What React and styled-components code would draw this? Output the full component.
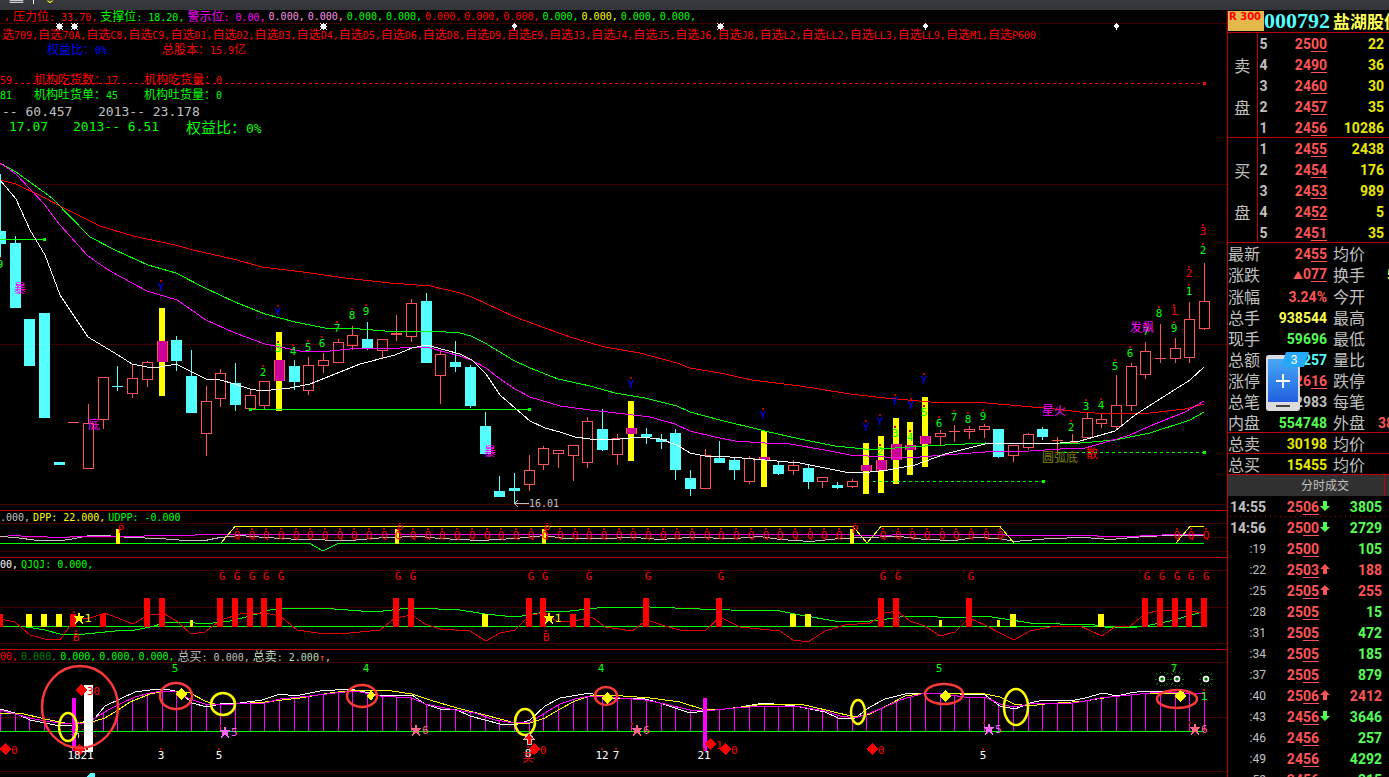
import React from 'react';
import styled, { createGlobalStyle } from 'styled-components';

const MONO = '"DejaVu Sans Mono", "Noto Sans CJK SC", monospace';
const HAN = '"Noto Sans CJK SC", sans-serif';
const NUM = 'Roboto, "Noto Sans CJK SC", sans-serif';

const RED = '#ff0000';
const GREEN = '#00ff00';
const MAGENTA = '#ff00ff';
const YELLOW = '#ffff00';
const GRAY = '#c0c0c0';
const UP = '#ff5454';
const DOWN = '#54ffff';
const GRID = '#400000';

const GlobalStyle = createGlobalStyle`
  * { box-sizing: border-box; }
  body { margin: 0; background: #000; color: ${GRAY}; font-family: ${NUM}; }
`;

const Shell = styled.div`
  height: 100vh;
  overflow: hidden;
  display: flex;
  flex-direction: column;
`;
const TopBar = styled.header`
  flex: none;
  height: 10px;
  overflow: hidden;
  background: linear-gradient(#3a3b3f, #333438);
  svg { display: block; }
`;
const Columns = styled.div`
  flex: 1;
  min-height: 0;
  display: grid;
  grid-template-columns: minmax(0, 1fr) 162px;
`;
const Charts = styled.main`
  min-width: 0;
  overflow: hidden;
`;
const Panel = styled.section`
  border-top: ${(p) => (p.$first ? '0' : '1px solid #c00000')};
`;
const Legend = styled.div`
  display: flex;
  gap: 3px;
  height: ${(p) => p.$height || 12}px;
  padding-left: ${(p) => p.$inset || 0}px;
  white-space: nowrap;
  font: 10px/13px ${MONO};
`;
const Tint = styled.span`
  color: ${(p) => p.$color};
  white-space: pre;
`;
const Han = styled.span`
  font-family: ${HAN};
  font-size: ${(p) => p.$size}px;
  line-height: 1;
`;
const Canvas = styled.div`
  position: relative;
`;
const Drawing = styled.svg`
  display: block;
  width: 100%;
  height: auto;
  overflow: hidden;
`;
const Notes = styled.div`
  position: absolute;
  top: 5px;
  left: 0;
`;
const NoteRow = styled.div`
  display: grid;
  grid-template-columns: ${(p) => p.$columns || 'auto'};
  height: 15px;
  margin-top: ${(p) => p.$gap || 0}px;
  padding-left: ${(p) => p.$inset || 0}px;
  white-space: pre;
  color: ${(p) => p.$color};
  font: ${(p) => (p.$large ? 13 : 10)}px/15px ${MONO};
`;

const Side = styled.aside`
  border-left: 1px solid #c00000;
  position: relative;
  overflow: hidden;
`;
const StockHead = styled.div`
  display: flex;
  align-items: center;
  height: 23px;
  overflow: hidden;
  white-space: nowrap;
  border-bottom: 1px solid #c00000;
`;
const Tag = styled.span`
  flex: none;
  align-self: flex-start;
  width: 36px;
  height: 20px;
  margin-top: 1px;
  padding-left: 1px;
  background: #e4b84a;
  color: ${RED};
  font: bold 10px/12px "DejaVu Sans", sans-serif;
`;
const Code = styled.strong`
  flex: none;
  font: bold 22px/22px "Liberation Serif", serif;
  color: ${DOWN};
`;
const StockName = styled.strong`
  flex: none;
  margin-left: 3px;
  font: bold 17px/22px ${HAN};
  color: #ffff54;
`;
const Grid = styled.table`
  width: 100%;
  table-layout: fixed;
  border-collapse: collapse;
  border-spacing: 0;
  font: bold 14px/20px ${NUM};
  td, th { padding: 0; height: 21px; white-space: nowrap; }
`;
const Book = styled(Grid)`
  height: 105px;
  box-shadow: inset 0 -1px #c00000;
`;
const BookSide = styled.th`
  border-right: 1px solid #c00000;
  font: 16px/42px ${HAN};
  span { display: block; }
`;
const Level = styled.th`
  text-align: left;
  padding-left: 2px !important;
`;
const Value = styled.td`
  color: ${(p) => p.$color};
  text-align: right;
  padding-right: ${(p) => p.$end || 0}px !important;
  u { text-decoration: underline; text-decoration-thickness: 1px; text-underline-offset: 2px; }
  svg { display: block; }
`;
const Triangle = styled.span`
  font-size: 10px;
`;
const Label = styled.th`
  font: 16px/18px ${HAN};
  text-align: left;
  padding-left: ${(p) => p.$start || 0}px !important;
  padding-bottom: 2px !important;
`;
const Cut = styled.td`
  overflow: hidden;
  color: ${(p) => p.$color};
  padding-left: ${(p) => p.$start}px !important;
`;
const Quotes = styled(Grid)`
  box-shadow: inset 0 -1px #c00000;
`;
const TicksTitle = styled.h2`
  display: flex;
  margin: 0;
  height: 21px;
  background: #303030;
  font: 12px/20px ${HAN};
  color: ${GRAY};
  span { flex: 1; padding-left: 38px; text-align: center; border-right: 1px solid #c00000; }
  &::after { content: ''; width: 4px; }
`;
const TickRow = styled.tr`
  ${(p) => p.$dotted && 'background: radial-gradient(circle, #c00000 1px, transparent 1px) 0 19px / 5px 3px repeat-x;'}
`;
const Time = styled.th`
  text-align: right;
  font: ${(p) => (p.$full ? 'bold 14px' : '12px')}/20px ${NUM};
`;
const PhoneButton = styled.button`
  position: absolute;
  left: 38px;
  top: 341px;
  padding: 0;
  border: 0;
  background: none;
  svg { display: block; }
`;

const HAN_RUN = /([\u3000-\u9fff\uff00-\uffef]+)/;
const Mixed = ({ children, size = 12 }) =>
  children.split(HAN_RUN).map((part, i) => (i % 2 ? <Han key={i} $size={size}>{part}</Han> : part));

const legends = {
  price: [
    [RED, ','], [RED, '压力位: 33.70,'], [GREEN, '支撑位: 18.20,'], [MAGENTA, '警示位: 0.00,'],
    ['#ff90e8', '0.000,'], ['#ff90e8', '0.000,'], [GREEN, '0.000,'], [GREEN, '0.000,'],
    [RED, '0.000,'], [RED, '0.000,'], [RED, '0.000,'], [GREEN, '0.000,'],
    [YELLOW, '0.000,'], [GREEN, '0.000,'], [GREEN, '0.000,'],
  ],
  dpp: [[GRAY, '.000,'], [YELLOW, 'DPP: 22.000,'], [GREEN, 'UDPP: -0.000']],
  qjqj: [['#ffffff', '00,'], [GREEN, 'QJQJ: 0.000,']],
  flow: [
    [RED, '00,'], ['#008000', '0.000,'], [GREEN, '0.000,'], [GREEN, '0.000,'], [GREEN, '0.000,'],
    [GRAY, '总买: 0.000,'], ['#c0dcc0', '总卖: 2.000', UP, '↑', ','],
  ],
};
const LegendRow = ({ items, ...rest }) => (
  <Legend {...rest}>
    {items.map(([color, text, markColor, mark, tail], i) => (
      <Tint key={i} $color={color}>
        <Mixed>{text}</Mixed>
        {mark && <Tint $color={markColor}>{mark}</Tint>}
        {tail}
      </Tint>
    ))}
  </Legend>
);

const slot = (k) => Math.floor(162 + 14.683 * (k - 11));

/* [kind, high, top, bottom, low, yellow bar from, to] for each trading day */
const candles = [
  ['d', 174, 231, 244, 257], ['d', 236, 243, 308, 308], ['d', 319, 319, 366, 366], ['d', 313, 313, 418, 418],
  ['d', 462, 462, 465, 465], ['u', 422, 422, 423, 423], ['u', 404, 423, 469, 469], ['u', 377, 377, 420, 429],
  ['d', 366, 386, 387, 391], ['u', 365, 378, 394, 398], ['u', 361, 362, 380, 387], ['m', 341, 341, 362, 362, 308, 396],
  ['d', 336, 340, 361, 371], ['d', 350, 376, 413, 413], ['u', 386, 401, 434, 456], ['u', 369, 373, 399, 407],
  ['d', 363, 383, 405, 411], ['u', 390, 395, 409, 409], ['u', 381, 381, 406, 409], ['m', 360, 360, 381, 381, 332, 411],
  ['d', 360, 366, 382, 390], ['u', 357, 365, 391, 395], ['u', 353, 360, 366, 373], ['u', 339, 342, 363, 363],
  ['u', 326, 335, 346, 350], ['d', 322, 339, 348, 350], ['u', 339, 339, 351, 359], ['u', 315, 333, 335, 341],
  ['u', 299, 303, 337, 342], ['d', 293, 301, 363, 363], ['u', 350, 354, 376, 404], ['d', 341, 362, 367, 372],
  ['d', 365, 367, 406, 408], ['d', 412, 426, 454, 454], ['d', 476, 491, 497, 497], ['d', 473, 488, 491, 504],
  ['u', 455, 470, 485, 491], ['u', 446, 448, 465, 470], ['u', 450, 450, 454, 468], ['u', 445, 445, 456, 481],
  ['u', 417, 421, 463, 468], ['d', 409, 429, 450, 451], ['u', 434, 438, 455, 465], ['m', 428, 428, 434, 434, 401, 461],
  ['d', 428, 434, 437, 444], ['d', 434, 439, 442, 449], ['d', 429, 433, 470, 480], ['d', 470, 478, 489, 496],
  ['u', 449, 455, 489, 489], ['d', 441, 458, 463, 463], ['d', 457, 460, 470, 480], ['u', 456, 458, 482, 484],
  ['m', 457, 457, 460, 460, 431, 487], ['d', 462, 465, 474, 475], ['u', 460, 465, 471, 475], ['d', 465, 468, 482, 489],
  ['u', 477, 477, 482, 488], ['d', 482, 485, 488, 489], ['u', 479, 481, 487, 488], ['m', 465, 465, 471, 471, 443, 494],
  ['m', 460, 460, 471, 471, 436, 493], ['m', 444, 444, 460, 460, 418, 484], ['m', 445, 445, 450, 450, 422, 475], ['m', 436, 436, 444, 444, 397, 467],
  ['u', 430, 433, 437, 445], ['u', 425, 431, 432, 442], ['u', 426, 429, 432, 439], ['u', 424, 426, 430, 438],
  ['d', 429, 429, 457, 458], ['u', 445, 445, 456, 462], ['u', 433, 434, 448, 450], ['d', 427, 429, 437, 440],
  ['u', 437, 440, 441, 453], ['u', 434, 442, 443, 443], ['u', 413, 418, 438, 438], ['u', 414, 419, 424, 428],
  ['u', 375, 405, 427, 430], ['u', 363, 366, 406, 411], ['u', 342, 351, 375, 379], ['u', 324, 358, 359, 363],
  ['u', 338, 348, 359, 363], ['u', 302, 319, 358, 363], ['u', 263, 301, 329, 330],
];

const Candle = ({ k, data }) => {
  const [kind, high, top, bottom, low, y1, y2] = data;
  const x = slot(k);
  const h = bottom - top;
  if (kind === 'm') {
    return (
      <g>
        <rect x={x - 3} y={y1} width="6" height={y2 - y1} fill={YELLOW} />
        <rect x={x - 5} y={top} width="11" height={h} fill={UP} />
        <rect x={x - 4} y={top} width="9" height={h} fill="#cc0099" />
      </g>
    );
  }
  const color = kind === 'u' ? UP : DOWN;
  const hollow = kind === 'u' && h > 2;
  return (
    <g>
      <path d={`M${x + 0.5} ${high}V${top}M${x + 0.5} ${bottom}V${low}`} stroke={color} />
      {hollow
        ? <rect x={x - 4.5} y={top + 0.5} width="10" height={h - 1} fill="none" stroke={color} />
        : <rect x={x - 5} y={top} width="11" height={h} fill={color} />}
    </g>
  );
};

const Line = ({ points, color, ...rest }) => (
  <polyline points={points} fill="none" stroke={color} strokeWidth="1" {...rest} />
);
const Rules = ({ ys }) => ys.map((y) => <path key={y} d={`M0 ${y + 0.5}H1227`} stroke={GRID} />);

const Mark = ({ x, y, text, color = GREEN, size = 11, dot = true, anchor = 'middle' }) => (
  <g>
    {dot && <rect x={x - 1} y={y - 7} width="2" height="2" fill="#c00000" />}
    <text
      x={x} y={y + 4} fill={color} textAnchor={anchor}
      style={{ fontFamily: MONO, fontSize: size }}
    >{text}</text>
  </g>
);
const Diamond = ({ x, y, color, r = 6 }) => (
  <path d={`M${x} ${y - r}L${x + r} ${y}L${x} ${y + r}L${x - r} ${y}Z`} fill={color} />
);
const Star = ({ x, y, color }) => (
  <path
    d="M0 -6L1.5 -2H6L2.5 1L4 6L0 3L-4 6L-2.5 1L-6 -2H-1.5Z"
    transform={`translate(${x} ${y})`} fill={color}
  />
);
const Ring = ({ x, y, rx, ry, color = '#ff3838' }) => (
  <ellipse cx={x} cy={y} rx={rx} ry={ry} fill="none" stroke={color} strokeWidth="2.5" shapeRendering="auto" />
);

const dayCounts = [
  [0, 264, 9], [263, 372, 2], [278, 348, 3], [293, 351, 4], [308, 347, 5], [322, 343, 6], [337, 328, 7], [352, 315, 8],
  [366, 311, 9], [880, 451, 2], [895, 433, 3], [910, 437, 4], [924, 412, 5], [939, 423, 6], [954, 417, 7],
  [968, 419, 8], [983, 416, 9], [1071, 427, 2], [1086, 406, 3], [1101, 405, 4], [1115, 366, 5], [1130, 353, 6],
  [1146, 331, 7], [1159, 313, 8], [1174, 328, 9], [1189, 291, 1], [1203, 250, 2],
];
const redCounts = [[1174, 311, 1], [1189, 273, 2], [1203, 231, 3]];
const signals = [[161, 287], [278, 312], [631, 384], [763, 415], [866, 427], [880, 421], [895, 401], [911, 405], [924, 380]];
const words = [
  [20, 288, '暴', MAGENTA], [490, 451, '暴', MAGENTA], [94, 424, '底', MAGENTA], [1142, 327, '发飙', MAGENTA],
  [1054, 410, '星火', MAGENTA], [1060, 457, '圆弧底', '#808000'], [1092, 453, '散', RED],
];

const PriceChart = () => (
  <Drawing viewBox="0 23 1227 487" shapeRendering="crispEdges" role="img" aria-label="日线">
    <Rules ys={[23, 184, 344, 504]} />
    {[59, 74, 323, 720].map((x) => (
      <path
        key={x}
        d="M-2 1H3V6H-2ZM-3 0H-2V1H-3ZM3 0H4V1H3ZM-3 6H-2V7H-3ZM3 6H4V7H3ZM0 0H1V1H0ZM0 6H1V7H0ZM-3 3H-2V4H-3ZM3 3H4V4H3Z"
        transform={`translate(${x} 23)`} fill="#fff"
      />
    ))}
    {[514, 925, 1116].map((x) => <path key={x} d={`M${x} 22H${x + 1}V24H${x + 2}V25H${x + 3}V27H${x + 2}V28H${x + 1}V30H${x}V28H${x - 1}V27H${x - 2}V25H${x - 1}V24H${x}Z`} fill="#fff" />)}
    <path d="M15 83.5H1204" stroke={RED} strokeDasharray="3 3" />
    <rect x="1203" y="82" width="3" height="3" fill={RED} />
    {candles.map((c, k) => <Candle key={k} k={k} data={c} />)}
    <path d="M0 239.5H44M250 409.5H529" stroke={GREEN} />
    <path d="M873 481.5H1042M1058 452.5H1204" stroke={GREEN} strokeDasharray="3 3" />
    <path d="M43 238h3v3h-3zM249 408h3v3h-3zM528 408h3v3h-3zM1042 480h3v3h-3zM1203 451h3v3h-3z" fill={GREEN} />
    <Line color={RED} points="0,180 16,184 45,198 60,206 100,226 133,236 175,245 193,250 233,259 262,267 303,272 345,278 390,283 431,286 460,293 472,297 515,317 545,328 573,338 605,347 640,353 677,363 690,368 720,373 752,380 800,386 850,394 885,398 930,402 987,403 1055,409 1080,412 1110,414 1150,413 1185,409 1204,404" />
    <Line color={GREEN} points="0,163 16,172 52,198 90,237 115,250 148,265 176,273 205,288 235,302 265,314 295,322 325,328 360,329 385,331 431,331 460,333 471,336 485,343 513,360 530,368 558,379 590,386 615,393 645,398 677,406 690,412 720,420 765,431 800,439 835,446 865,449 880,449 895,448 925,446 985,443 1060,444 1080,443 1115,440 1150,433 1190,420 1204,412" />
    <Line color={MAGENTA} points="0,163 16,174 45,205 60,225 88,256 110,271 132,283 147,291 177,300 206,320 235,333 265,344 300,351 330,351 360,348 385,349 415,347 430,348 460,356 471,360 486,368 500,379 515,389 530,397 560,406 590,410 625,414 650,417 675,424 690,431 715,437 735,441 765,443 790,444 825,450 850,455 885,457 920,457 945,455 985,452 1030,451 1060,449 1085,448 1110,441 1130,435 1150,426 1185,412 1204,401" />
    <Line color="#fff" points="0,180 16,199 30,230 45,255 60,295 88,337 118,355 132,364 147,367 160,367 176,364 190,371 206,379 220,380 235,384 250,389 262,391 290,388 310,384 325,378 360,364 395,355 412,348 427,345 445,350 460,354 472,360 486,374 500,395 530,421 545,428 560,432 575,437 590,439 620,439 640,437 660,439 677,445 690,453 705,456 730,457 765,460 800,463 825,468 850,473 870,472 888,470 915,465 945,454 985,444 1060,443 1080,441 1115,431 1135,415 1160,399 1190,380 1204,367" />
    {dayCounts.map(([x, y, n]) => <Mark key={`${x}-${y}`} x={x} y={y} text={n} />)}
    {redCounts.map(([x, y, n]) => <Mark key={x} x={x} y={y} text={n} color={RED} />)}
    {signals.map(([x, y]) => <Mark key={x} x={x} y={y} text="Y" color="#0000ff" />)}
    {words.map(([x, y, text, color]) => <Mark key={`${x}`} x={x} y={y + 1} text={text} color={color} size={12} dot={false} />)}
    <path d="M515 503.5H529M518 500L515 503.5L518 507" stroke={GRAY} fill="none" />
    <Mark x={529} y={503} text="16.01" color={GRAY} size={10} dot={false} anchor="start" />
  </Drawing>
);

const range = (from, to) => Array.from({ length: to - from + 1 }, (_, i) => from + i);
const qDays = [...range(16, 57), ...range(60, 68), 80, 81, 82];

const DppChart = () => (
  <Drawing viewBox="0 523 1227 34" shapeRendering="crispEdges" role="img" aria-label="DPP">
    <Rules ys={[523, 537, 551]} />
    <Line color={GREEN} points="0,543.5 310,543.5 323,551 338,543.5 1204,543.5" />
    <Line color={GRAY} points="0,536.5 15,537.5 38,540.5 62,540.5 75,538.5 90,535.5 105,535.5 130,537.5 160,538.5 185,540.5 205,540.5 220,537.5 240,535.5 265,537.5 300,539.5 350,540.5 385,537.5 420,536.5 440,538.5 480,540.5 515,538.5 545,535.5 565,538.5 600,538.5 635,537.5 660,539.5 690,537.5 735,538.5 760,536.5 780,539.5 810,541.5 840,538.5 860,537.5 900,536.5 925,539.5 955,540.5 975,537.5 1000,538.5 1014,541.5 1050,538.5 1085,537.5 1110,539.5 1145,536.5 1170,535.5 1204,535.5" />
    <Line color={MAGENTA} points="8,535.5 60,537.5 80,536.5 118,536.5 221,534.5 845,534.5 855,535.5 885,535.5 900,534.5 1000,534.5 1010,535.5 1095,535.5 1100,536.5 1130,536.5 1150,535.5 1175,534.5 1204,534.5" />
    <Line color={YELLOW} points="221,543 235,526.5 853,526.5 867,543 881,526.5 1000,526.5 1014,543" />
    <Line color={YELLOW} points="1176,543 1190,526.5 1204,526.5" />
    {[118, 397, 544, 852].map((x) => (
      <g key={x}>
        <rect x={x - 2} y="529" width="4" height="15" fill={YELLOW} />
        <Mark x={x + 3} y={529} text="P" color={RED} />
      </g>
    ))}
    {qDays.map((k) => <Mark key={k} x={slot(k) + 2} y={535} text="Q" color={RED} />)}
  </Drawing>
);

const gDays = [15, 16, 17, 18, 19, 27, 28, 36, 37, 40, 44, 49, 60, 61, 66, 78, 79, 80, 81, 82];

const QjqjChart = () => (
  <Drawing viewBox="0 570 1227 79" shapeRendering="crispEdges" role="img" aria-label="QJQJ">
    <Rules ys={[570, 607, 643]} />
    <Line color={GREEN} points="0,626.5 1204,626.5" />
    <Line color={GREEN} points="20,626 45,630 60,634 85,634 115,631 135,630 150,627 165,623 185,622 205,624 230,621 250,616 270,610 290,608 320,608 375,612 400,609 415,608 460,610 485,614 505,616 522,616 545,612 570,611 597,608 650,607 700,609 730,610 780,611 800,615 835,621 870,621 895,618 905,616 925,616 950,618 985,616 1005,619 1030,623 1060,624 1090,624 1105,627 1130,628 1150,625 1175,620 1190,615 1204,612" />
    <Line color="#e00000" points="0,619 15,622 30,635 45,639 60,640 74,620 90,618 105,613 133,624 150,614 165,614 178,622 191,634 205,632 221,620 240,614 265,613 280,616 297,630 325,634 350,633 380,630 395,618 412,615 425,624 440,629 470,631 486,641 500,633 515,630 530,615 545,613 558,622 575,621 592,617 605,627 632,631 647,620 665,626 680,630 705,631 720,617 740,627 780,631 793,640 808,642 825,631 845,625 870,623 885,613 897,611 910,621 925,626 940,636 955,632 969,618 985,625 1000,633 1014,640 1030,631 1050,627 1080,626 1102,636 1115,627 1130,626 1145,614 1160,610 1190,611 1204,613" />
    {[10, 11, ...gDays].map((k) => <rect key={k} x={slot(k) - 3} y="598" width="6" height="29" fill={RED} />)}
    {[0, 5, 7, 39].map((k) => <rect key={k} x={slot(k) - 3} y="614" width="6" height="13" fill={RED} />)}
    {[2, 3, 4, 33, 54, 55, 69, 75].map((k) => <rect key={k} x={slot(k) - 3} y="614" width="6" height="13" fill={YELLOW} />)}
    {[13, 64, 68].map((k) => <rect key={k} x={slot(k) - 1} y="620" width="3" height="7" fill={YELLOW} />)}
    {gDays.map((k) => <Mark key={k} x={slot(k) + 2} y={576} text="G" color={RED} />)}
    {[74, 544].map((x) => (
      <g key={x}>
        <rect x={x - 1} y="611" width="2" height="2" fill="#c00000" />
        <Star x={x + 5} y={618} color={YELLOW} />
        <Mark x={x + 14} y={618} text="1" color={YELLOW} dot={false} />
        <Mark x={x + 2} y={637} text="B" color={RED} />
      </g>
    ))}
  </Drawing>
);

const stemCurve = [
  [0, 710], [15, 714], [30, 718], [45, 721], [60, 723], [74, 724], [88, 723], [95, 718], [110, 709], [120, 704], [135, 697],
  [150, 693], [162, 691], [176, 692], [190, 699], [205, 704], [220, 705], [250, 703], [265, 703], [280, 699],
  [310, 696], [335, 693], [355, 691], [380, 696], [412, 698], [425, 704], [440, 707], [455, 710], [475, 713], [495, 720],
  [515, 723], [530, 722], [545, 713], [560, 704], [575, 699], [590, 696], [605, 697], [620, 698], [645, 700], [665, 704],
  [690, 710], [705, 711], [735, 708], [765, 706], [795, 706], [825, 711], [840, 716], [855, 718], [870, 713], [885, 707],
  [900, 700], [925, 693], [945, 694], [970, 698], [985, 697], [1000, 704], [1014, 707], [1030, 704], [1045, 703],
  [1073, 703], [1085, 701], [1100, 698], [1130, 695], [1160, 692], [1205, 694],
];
const curveAt = (x) => {
  const i = Math.max(1, stemCurve.findIndex((p) => p[0] >= x));
  const [x0, y0] = stemCurve[i - 1];
  const [x1, y1] = stemCurve[i];
  return y0 + ((y1 - y0) * (x - x0)) / (x1 - x0);
};

const Sun = ({ x, y, color }) => (
  <path
    d="M-6 -6l2 2M6 -6l-2 2M-6 6l2 -2M6 6l-2 -2M-7 0h2M5 0h2M-2 -6v-1M2 -6v-1M-2 6v1M2 6v1"
    transform={`translate(${x} ${y})`} stroke={color} fill="none"
  />
);

const FlowChart = () => (
  <Drawing viewBox="0 662 1227 115" shapeRendering="crispEdges" role="img" aria-label="总买 总卖">
    <Rules ys={[662, 717, 771]} />
    {range(0, 82).map((k) => <path key={k} d={`M${slot(k) + 0.5} ${Math.round(curveAt(slot(k)))}V731`} stroke={MAGENTA} />)}
    <Line color={GREEN} points="0,731.5 1204,731.5" />
    <Line color="#fff" points="0,709 15,713 30,720 45,723 60,726 74,725 95,718 105,706 120,699 135,692 150,690 165,689 180,692 192,703 207,707 220,704 240,703 262,700 280,694 295,696 320,691 350,689 365,692 380,696 412,695 425,704 440,709 457,710 470,716 500,724 515,725 530,720 545,706 560,698 590,693 605,698 632,698 645,699 660,703 690,713 705,711 735,708 764,703 795,706 825,712 838,718 855,718 870,707 885,699 905,694 925,693 960,694 985,695 1000,706 1015,709 1030,703 1043,700 1070,701 1085,698 1103,693 1117,696 1130,693 1145,691 1204,694" />
    <Line color={YELLOW} points="0,713 20,713 45,719 70,724 95,721 105,718 118,710 130,702 150,694 165,691 190,693 205,701 215,704 235,704 265,702 300,698 330,693 355,690 385,690 412,694 430,700 457,708 485,715 515,723 530,723 545,718 560,709 575,701 590,696 610,695 650,698 680,702 705,710 725,709 750,706 765,704 800,704 830,711 855,717 870,714 890,704 905,696 925,693 985,694 1000,697 1014,704 1030,706 1045,704 1085,701 1110,697 1150,693 1204,693" />
    <Line color={MAGENTA} points={stemCurve.map((p) => p.join()).join(' ')} />
    <rect x="72" y="698" width="4" height="53" fill={MAGENTA} />
    <rect x="703" y="698" width="4" height="53" fill={MAGENTA} />
    <Sun x={77} y={729} color="#c00000" />
    <rect x="84" y="685" width="9" height="67" fill="#fff" />
    <path d="M94 723l2 -2M94 735l2 2M95 729h2" stroke="#c00000" fill="none" />
    <Diamond x={79} y={750} color={RED} />
    {[[5, 749, '0'], [81, 690, '30'], [534, 749, '0'], [710, 744, '1'], [725, 749, '0'], [872, 749, '0']].map(([x, y, t]) => (
      <g key={x}>
        <Diamond x={x} y={y} color={RED} />
        <Mark x={x + 6} y={y + 1} text={t} color={RED} dot={false} anchor="start" />
      </g>
    ))}
    {[[225, 732, '5', '#ff66ff'], [416, 730, '6', '#ff6688'], [637, 730, '6', '#ff6688'], [989, 729, '5', '#ff66ff'], [1195, 729, '6', '#ff6688']].map(([x, y, t, c]) => (
      <g key={x}>
        <rect x={x - 6} y={y - 7} width="2" height="2" fill="#c00000" />
        <Star x={x} y={y} color={c} />
        <Mark x={x + 6} y={y} text={t} color={c} dot={false} anchor="start" />
      </g>
    ))}
    <path d="M76 731V735L72 738M74 733H78V738" stroke={GRAY} fill="none" />
    <Ring x={80} y={707} rx={38} ry={41} />
    <Ring x={68} y={727} rx={9} ry={14} color={YELLOW} />
    <Ring x={176} y={696} rx={16} ry={13} />
    <Ring x={223} y={704} rx={12} ry={11} color={YELLOW} />
    <Ring x={362} y={696} rx={15} ry={11} />
    <Ring x={525} y={722} rx={10} ry={13} color={YELLOW} />
    <Ring x={606} y={696} rx={11} ry={9} />
    <Ring x={858} y={712} rx={7} ry={12} color={YELLOW} />
    <Ring x={944} y={694} rx={19} ry={10} />
    <Ring x={1016} y={707} rx={12} ry={18} color={YELLOW} />
    <Ring x={1177} y={699} rx={20} ry={9} />
    {[[181, 694], [607, 698], [945, 696], [1180, 696]].map(([x, y]) => <Diamond key={x} x={x} y={y} color={YELLOW} />)}
    <path d="M371 690L375 695L371 701L367 696Z" fill={YELLOW} />
    {[[175, 5], [366, 4], [601, 4], [939, 5], [1174, 7]].map(([x, n]) => <Mark key={x} x={x} y={668} text={n} />)}
    <Mark x={1204} y={696} text="1" />
    {[[74, '18'], [87, '21'], [161, '3'], [219, '5'], [602, '12'], [616, '7'], [704, '21'], [983, '5']].map(([x, t]) => (
      <Mark key={x} x={x} y={755} text={t} color="#fff" />
    ))}
    <Mark x={528} y={753} text="8" color="#fff" />
    <Mark x={528} y={758} text="买" color={RED} size={12} dot={false} />
    <path d="M529 733L534 739H531V744H527V739H524Z" fill={RED} stroke={GRAY} />
    {[1162, 1177, 1206].map((x) => (
      <g key={x}>
        <Sun x={x} y={679} color="#008000" />
        <circle cx={x} cy="679" r="2.5" fill="#008000" stroke="#fff" shapeRendering="auto" strokeWidth="1.5" />
      </g>
    ))}
    <path d="M87 777L90 773H95V777Z" fill={DOWN} />
  </Drawing>
);

const watchlists = ['选709', '自选70A', '自选C8', '自选C9', '自选D1', '自选D2', '自选D3', '自选D4', '自选D5', '自选D6', '自选D8', '自选D9', '自选E9', '自选J3', '自选J4', '自选J5', '自选J6', '自选J8', '自选L2', '自选LL2', '自选LL3', '自选LL9', '自选M1', '自选P600'];

const sell = [[5, '2500', 22], [4, '2490', 36], [3, '2460', 30], [2, '2457', 35], [1, '2456', 10286]];
const buy = [[1, '2455', 2438], [2, '2454', 176], [3, '2453', 989], [4, '2452', 5], [5, '2451', 35]];

const Price = ({ value }) => <>{value.slice(0, -2)}<u>{value.slice(-2)}</u></>;

const OrderBook = ({ side, rows }) => (
  <Book>
    <colgroup><col width="29" /><col width="20" /><col width="50" /><col /></colgroup>
    <tbody>
      {rows.map(([level, price, volume], i) => (
        <tr key={level}>
          {i === 0 && <BookSide rowSpan={5}><span>{side}</span><span>盘</span></BookSide>}
          <Level>{level}</Level>
          <Value $color={UP}><Price value={price} /></Value>
          <Value $color="#e8e800" $end={5}>{volume}</Value>
        </tr>
      ))}
    </tbody>
  </Book>
);

const quotes = [
  ['最新', <Price value="2455" />, UP, '均价'],
  ['涨跌', <><Triangle>▲</Triangle><Price value="077" /></>, UP, '换手', '5', '#ffff54', 20],
  ['涨幅', '3.24%', UP, '今开'],
  ['总手', '938544', '#ffff54', '最高'],
  ['现手', '59696', '#54ff54', '最低'],
  ['总额', '257', DOWN, '量比'],
  ['涨停', <Price value="2616" />, UP, '跌停'],
  ['总笔', '2983', GRAY, '每笔'],
  ['内盘', '554748', '#54ff54', '外盘', '38', UP, 11],
];
const QuoteTable = ({ rows }) => (
  <Quotes>
    <colgroup><col width="38" /><col width="61" /><col width="40" /><col /></colgroup>
    <tbody>
      {rows.map(([label, value, color, label2, value2, color2, start]) => (
        <tr key={label}>
          <Label>{label}</Label>
          <Value $color={color}>{value}</Value>
          <Label $start={6}>{label2}</Label>
          <Cut $color={color2} $start={start || 0}>{value2}</Cut>
        </tr>
      ))}
    </tbody>
  </Quotes>
);

const ticks = [
  ['14:55', '2506', 'down', 3805], ['14:56', '2500', 'down', 2729], [':19', '2500', '', 105], [':22', '2503', 'up', 188],
  [':25', '2505', 'up', 255], [':28', '2505', '', 15], [':31', '2505', '', 472], [':34', '2505', '', 185],
  [':37', '2505', '', 879], [':40', '2506', 'up', 2412], [':43', '2456', 'down', 3646], [':46', '2456', '', 257],
  [':49', '2456', '', 4292], [':52', '2456', '', 315],
];
const Arrow = ({ up }) => (
  <svg width="11" height="14" viewBox="0 0 11 14" aria-hidden="true">
    <path
      d={up ? 'M6 1L11 6H8V11H4V6H1Z' : 'M6 11L11 6H8V1H4V6H1Z'}
      fill={up ? UP : '#54ff54'}
    />
  </svg>
);

export default function App() {
  return (
    <Shell>
      <GlobalStyle />
      <TopBar>
        <svg width="60" height="10" viewBox="0 0 60 10" aria-hidden="true">
          <path d="M9 0H24V3H9Z" fill="#666" />
          <path d="M10 0.5H23M10 2.5H23" stroke="#ccc" />
          <path d="M33.5 0V4" stroke="#fff" />
          <path d="M45 0H55L50 4Z" fill="#e8e838" stroke="#222" />
          <path d="M48 0H52L50 2Z" fill="#444" />
        </svg>
      </TopBar>
      <Columns>
        <Charts>
          <Panel $first>
            <LegendRow items={legends.price} $height={13} $inset={4} />
            <Canvas>
              <PriceChart />
              <Notes>
                <NoteRow $color={RED} $inset={2}><span><Mixed>{watchlists.join(',')}</Mixed></span></NoteRow>
                <NoteRow $color={RED} $inset={47} $columns="115px auto">
                  <Tint $color="#0000ff"><Mixed>权益比：0%</Mixed></Tint>
                  <span><Mixed>总股本：15.9亿</Mixed></span>
                </NoteRow>
                <NoteRow $color={RED} $columns="34px 110px auto" $gap={15}>
                  <span>59</span><span><Mixed>机构吃货数：17</Mixed></span><span><Mixed>机构吃货量：0</Mixed></span>
                </NoteRow>
                <NoteRow $color={GREEN} $columns="34px 110px auto">
                  <span>81</span><span><Mixed>机构吐货单：45</Mixed></span><span><Mixed>机构吐货量：0</Mixed></span>
                </NoteRow>
                <NoteRow $color={GRAY} $large $inset={2} $columns="96px auto" $gap={1}>
                  <span>-- 60.457</span><span>2013-- 23.178</span>
                </NoteRow>
                <NoteRow $color={GREEN} $large $inset={9} $columns="64px 113px auto">
                  <span>17.07</span><span>2013-- 6.51</span><span><Mixed size={15}>权益比：0%</Mixed></span>
                </NoteRow>
              </Notes>
            </Canvas>
          </Panel>
          <Panel>
            <LegendRow items={legends.dpp} />
            <DppChart />
          </Panel>
          <Panel>
            <LegendRow items={legends.qjqj} />
            <QjqjChart />
          </Panel>
          <Panel>
            <LegendRow items={legends.flow} />
            <FlowChart />
          </Panel>
        </Charts>
        <Side>
          <StockHead><Tag>R 300</Tag><Code>000792</Code><StockName>盐湖股份</StockName></StockHead>
          <OrderBook side="卖" rows={sell} />
          <OrderBook side="买" rows={buy} />
          <QuoteTable rows={quotes} />
          <QuoteTable rows={[['总卖', '30198', '#e8e800', '均价']]} />
          <QuoteTable rows={[['总买', '15455', '#e8e800', '均价']]} />
          <TicksTitle><span>分时成交</span></TicksTitle>
          <Grid>
            <colgroup><col width="38" /><col width="53" /><col width="11" /><col /></colgroup>
            <tbody>
              {ticks.map(([time, price, move, volume], i) => (
                <TickRow key={time} $dotted={i === 0}>
                  <Time $full={time.length > 3}>{time}</Time>
                  <Value $color={UP}><Price value={price} /></Value>
                  <Value>{move && <Arrow up={move === 'up'} />}</Value>
                  <Value $color={move === 'up' ? UP : '#54ff54'} $end={7}>{volume}</Value>
                </TickRow>
              ))}
            </tbody>
          </Grid>
          <PhoneButton type="button" aria-label="手机">
            <svg width="46" height="62" viewBox="0 0 46 62">
              <defs>
                <linearGradient id="screen" x1="0" y1="0" x2="0" y2="1">
                  <stop offset="0" stopColor="#48a8f6" />
                  <stop offset="1" stopColor="#2060e0" />
                </linearGradient>
              </defs>
              <rect x="0" y="4" width="34" height="56" rx="3" fill="#dcdcdc" />
              <rect x="2" y="8" width="30" height="43" fill="url(#screen)" />
              <path d="M10 55H24" stroke="#444" strokeWidth="2" />
              <path d="M17 23V37M10 30H24" stroke="#fff" strokeWidth="2" />
              <path d="M20 1H43L38 16H15Z" fill="#28a8f8" />
              <text x="28" y="13" fill="#fff" textAnchor="middle" style={{ fontFamily: NUM, fontSize: 12 }}>3</text>
            </svg>
          </PhoneButton>
        </Side>
      </Columns>
    </Shell>
  );
}
